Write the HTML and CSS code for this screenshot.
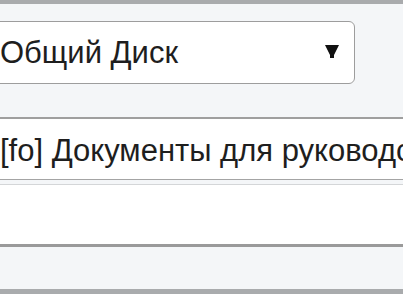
FILE: index.html
```html
<!DOCTYPE html>
<html lang="ru">

<head>
    <meta charset="UTF-8">
    <meta name="viewport" content="width=device-width, initial-scale=1.0">
    <title>Общий Диск</title>
    <link rel="stylesheet" href="styles.css">
</head>

<body>
    <div class="page">
        <div class="top-bar"></div>

        <!-- Drive picker -->
        <div class="picker">
            <span class="picker-label">Общий Диск</span>
            <svg class="picker-arrow" width="14" height="13" viewBox="0 0 14 13">
                <polygon points="0,0 14,0 9,10 9,13 5,13 5,10" fill="#111111" />
            </svg>
        </div>

        <div class="field">[fo] Документы для руководства</div>
        <div class="field field-empty"></div>

        <div class="bottom-bar"></div>
    </div>
</body>

</html>
```

FILE: styles.css
```css
body {
    margin: 0;
    padding: 0;
    background-color: #f4f6f8;
    font-family: "Liberation Sans", Arial, sans-serif;
    overflow: hidden;
}

.page {
    display: flex;
    flex-direction: column;
    height: 294px;
    overflow: hidden;
}

.top-bar {
    height: 4px;
    background-color: #a9abad;
}

.picker {
    display: flex;
    align-items: center;
    justify-content: space-between;
    box-sizing: border-box;
    width: 367px;
    height: 63px;
    margin: 17px 0 0 -12px;
    padding: 0 15px 0 11px;
    background: #ffffff;
    border: 1px solid #9d9d9d;
    border-radius: 6px;
}

.picker-label {
    font-size: 31px;
    color: #1e1e1e;
    white-space: nowrap;
}

.picker-arrow {
    display: block;
    margin-top: -2px;
}

.field {
    box-sizing: border-box;
    height: 63px;
    margin: 33px -20px 0 -12px;
    padding: 3px 0 0 12px;
    background: #ffffff;
    border-top: 2px solid #9f9f9f;
    border-bottom: 1px solid #a4a4a4;
    font-size: 31px;
    line-height: 57px;
    color: #1e1e1e;
    white-space: nowrap;
    overflow: hidden;
}

.field-empty {
    margin-top: 4px;
    border-top: 1px solid #d4d6d8;
    border-bottom: 3px solid #9a9a9a;
}

.bottom-bar {
    height: 5px;
    margin-top: auto;
    background-color: #a9abad;
}
```
